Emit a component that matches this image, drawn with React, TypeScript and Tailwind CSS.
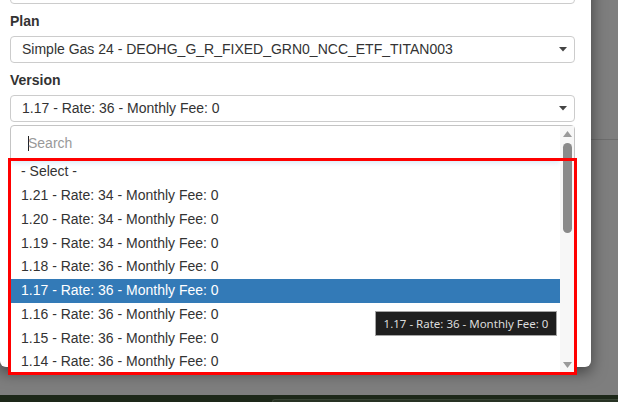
const versions = [
  "- Select -",
  "1.21 - Rate: 34 - Monthly Fee: 0",
  "1.20 - Rate: 34 - Monthly Fee: 0",
  "1.19 - Rate: 34 - Monthly Fee: 0",
  "1.18 - Rate: 36 - Monthly Fee: 0",
  "1.17 - Rate: 36 - Monthly Fee: 0",
  "1.16 - Rate: 36 - Monthly Fee: 0",
  "1.15 - Rate: 36 - Monthly Fee: 0",
  "1.14 - Rate: 36 - Monthly Fee: 0",
];

const selected = "1.17 - Rate: 36 - Monthly Fee: 0";

function Caret() {
  return (
    <svg width="8" height="5" viewBox="0 0 8 5" className="shrink-0">
      <path d="M0 0 L8 0 L4 4.5 Z" fill="#444" />
    </svg>
  );
}

function SelectBox({ value }: { value: string }) {
  return (
    <div className="flex h-[27px] items-center rounded-[4px] border border-[#cccccc] bg-white pl-[11px] pr-[7px]">
      <span className="flex-1 truncate text-[14px] text-[#333]">{value}</span>
      <Caret />
    </div>
  );
}

function Scrollbar() {
  return (
    <div className="flex w-[14px] flex-col items-center bg-[#f7f7f7] pt-[5px] pb-[4px]">
      <svg width="9" height="6" viewBox="0 0 9 6">
        <path d="M0 6 L9 6 L4.5 0 Z" fill="#9a9a9a" />
      </svg>
      <div className="mt-[6px] h-[90px] w-[9px] rounded-full bg-[#8a8a8a]" />
      <div className="flex-1" />
      <svg width="9" height="6" viewBox="0 0 9 6">
        <path d="M0 0 L9 0 L4.5 6 Z" fill="#9a9a9a" />
      </svg>
    </div>
  );
}

export default function App() {
  return (
    <div className="relative h-[402px] w-[618px] overflow-hidden bg-[#7e7e7e] font-['Liberation_Sans',Arial,sans-serif]">
      {/* page behind the backdrop */}
      <div className="flex h-full flex-col">
        <div className="h-[140px] border-b border-[#6d6d6d]" />
        <div className="flex-1" />
        <div className="flex h-[7px] bg-[#1d2819] pt-[4px] pl-[272px]">
          <div className="flex-1 rounded-tl-[4px] border-t border-l border-[#3a4536] bg-[#283324]" />
        </div>
      </div>

      {/* modal */}
      <div className="absolute left-0 top-[-40px] h-[407px] w-[591px] rounded-b-[6px] bg-white pl-[10px] pr-[16px] shadow-[0_5px_15px_rgba(0,0,0,0.5)]">
        <div className="mt-[10px] h-[34px] rounded-[4px] border border-[#cccccc]" />

        <div className="mt-[7px] mb-[5px] text-[14px] font-bold leading-[20px] text-[#333]">Plan</div>
        <SelectBox value="Simple Gas 24 - DEOHG_G_R_FIXED_GRN0_NCC_ETF_TITAN003" />

        <div className="mt-[7px] mb-[5px] text-[14px] font-bold leading-[20px] text-[#333]">Version</div>
        <SelectBox value={selected} />

        {/* open dropdown */}
        <div className="mt-[3px] flex h-[248px] rounded-t-[4px] border border-[#c4c4c4] bg-white">
          <div className="flex flex-1 flex-col overflow-hidden">
            <div className="flex h-[34px] shrink-0 items-center pl-[17px] text-[14px] text-[#999] shadow-[0_3px_5px_rgba(102,175,233,0.25)]">
              <span className="mr-[-1px] h-[15px] w-[1px] bg-[#222]" />
              Search
            </div>
            <div className="flex flex-col">
              {versions.map((v) => (
                <div
                  key={v}
                  className={`flex h-[23.75px] shrink-0 items-center pl-[10px] text-[14px] ${
                    v === selected ? "bg-[#337ab7] text-white" : "text-[#333]"
                  }`}
                >
                  {v}
                </div>
              ))}
            </div>
          </div>
          <Scrollbar />
        </div>
      </div>

      {/* tooltip */}
      <div className="absolute left-[375px] top-[311px] flex h-[25px] w-[182px] items-center justify-center border border-[#a5a5a5] bg-[#1f1f1f] font-['Noto_Sans',sans-serif] text-[11.5px] text-[#dcdcdc]">
        {selected}
      </div>

      {/* highlight frame */}
      <div className="absolute left-[8px] top-[158px] h-[217px] w-[569px] border-[3px] border-[#ff0000]" />
    </div>
  );
}
